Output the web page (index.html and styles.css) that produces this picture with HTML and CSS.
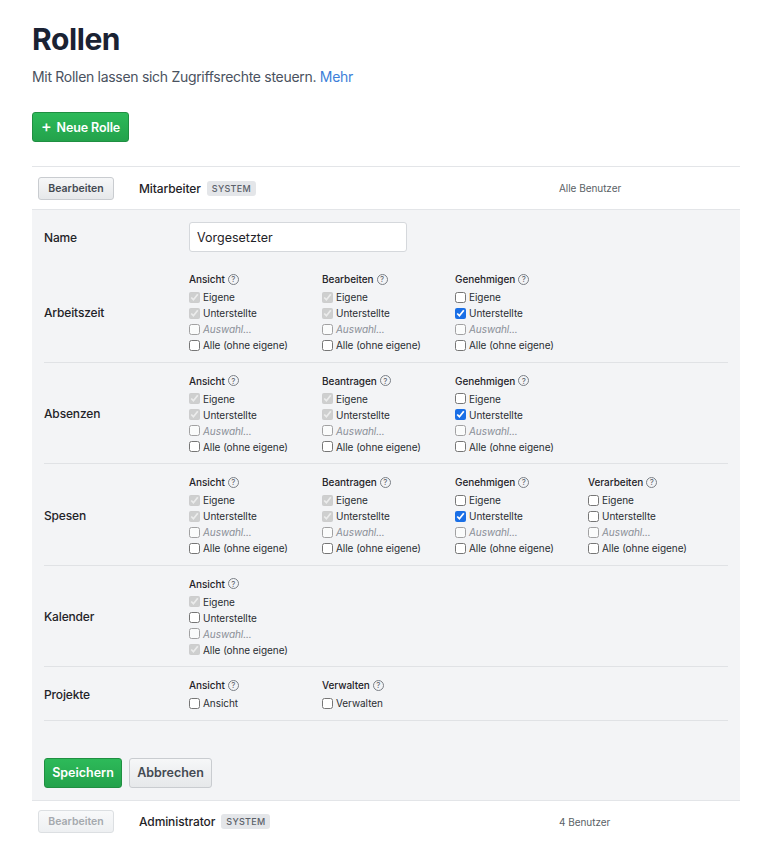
FILE: index.html
```html
<!DOCTYPE html>
<html lang="de">
<head>
<meta charset="utf-8">
<title>Rollen</title>
<link rel="stylesheet" href="styles.css">
</head>
<body>
<div class="page">
  <h1 class="title">Rollen</h1>
  <p class="lead">Mit Rollen lassen sich Zugriffsrechte steuern. <a class="more" href="#">Mehr</a></p>
  <button class="btn btn-green btn-new"><span class="plus">+</span> Neue Rolle</button>

  <div class="role-row">
    <button class="btn btn-grey btn-small">Bearbeiten</button>
    <div class="role-name">Mitarbeiter <span class="badge">System</span></div>
    <div class="role-users">Alle Benutzer</div>
  </div>

  <div class="panel">
    <div class="name-row">
      <label class="sec-label">Name</label>
      <input class="name-input" type="text" value="Vorgesetzter">
    </div>

    <div class="section">
      <div class="sec-label">Arbeitszeit</div>
      <div class="group">
        <div class="g-head">Ansicht <span class="help">?</span></div>
        <label class="cb"><input type="checkbox" checked disabled><span>Eigene</span></label>
        <label class="cb"><input type="checkbox" checked disabled><span>Unterstellte</span></label>
        <label class="cb off"><input type="checkbox"><span>Auswahl...</span></label>
        <label class="cb"><input type="checkbox"><span>Alle (ohne eigene)</span></label>
      </div>
      <div class="group">
        <div class="g-head">Bearbeiten <span class="help">?</span></div>
        <label class="cb"><input type="checkbox" checked disabled><span>Eigene</span></label>
        <label class="cb"><input type="checkbox" checked disabled><span>Unterstellte</span></label>
        <label class="cb off"><input type="checkbox"><span>Auswahl...</span></label>
        <label class="cb"><input type="checkbox"><span>Alle (ohne eigene)</span></label>
      </div>
      <div class="group">
        <div class="g-head">Genehmigen <span class="help">?</span></div>
        <label class="cb"><input type="checkbox"><span>Eigene</span></label>
        <label class="cb"><input type="checkbox" checked><span>Unterstellte</span></label>
        <label class="cb off"><input type="checkbox"><span>Auswahl...</span></label>
        <label class="cb"><input type="checkbox"><span>Alle (ohne eigene)</span></label>
      </div>
    </div>

    <div class="section">
      <div class="sec-label">Absenzen</div>
      <div class="group">
        <div class="g-head">Ansicht <span class="help">?</span></div>
        <label class="cb"><input type="checkbox" checked disabled><span>Eigene</span></label>
        <label class="cb"><input type="checkbox" checked disabled><span>Unterstellte</span></label>
        <label class="cb off"><input type="checkbox"><span>Auswahl...</span></label>
        <label class="cb"><input type="checkbox"><span>Alle (ohne eigene)</span></label>
      </div>
      <div class="group">
        <div class="g-head">Beantragen <span class="help">?</span></div>
        <label class="cb"><input type="checkbox" checked disabled><span>Eigene</span></label>
        <label class="cb"><input type="checkbox" checked disabled><span>Unterstellte</span></label>
        <label class="cb off"><input type="checkbox"><span>Auswahl...</span></label>
        <label class="cb"><input type="checkbox"><span>Alle (ohne eigene)</span></label>
      </div>
      <div class="group">
        <div class="g-head">Genehmigen <span class="help">?</span></div>
        <label class="cb"><input type="checkbox"><span>Eigene</span></label>
        <label class="cb"><input type="checkbox" checked><span>Unterstellte</span></label>
        <label class="cb off"><input type="checkbox"><span>Auswahl...</span></label>
        <label class="cb"><input type="checkbox"><span>Alle (ohne eigene)</span></label>
      </div>
    </div>

    <div class="section">
      <div class="sec-label">Spesen</div>
      <div class="group">
        <div class="g-head">Ansicht <span class="help">?</span></div>
        <label class="cb"><input type="checkbox" checked disabled><span>Eigene</span></label>
        <label class="cb"><input type="checkbox" checked disabled><span>Unterstellte</span></label>
        <label class="cb off"><input type="checkbox"><span>Auswahl...</span></label>
        <label class="cb"><input type="checkbox"><span>Alle (ohne eigene)</span></label>
      </div>
      <div class="group">
        <div class="g-head">Beantragen <span class="help">?</span></div>
        <label class="cb"><input type="checkbox" checked disabled><span>Eigene</span></label>
        <label class="cb"><input type="checkbox" checked disabled><span>Unterstellte</span></label>
        <label class="cb off"><input type="checkbox"><span>Auswahl...</span></label>
        <label class="cb"><input type="checkbox"><span>Alle (ohne eigene)</span></label>
      </div>
      <div class="group">
        <div class="g-head">Genehmigen <span class="help">?</span></div>
        <label class="cb"><input type="checkbox"><span>Eigene</span></label>
        <label class="cb"><input type="checkbox" checked><span>Unterstellte</span></label>
        <label class="cb off"><input type="checkbox"><span>Auswahl...</span></label>
        <label class="cb"><input type="checkbox"><span>Alle (ohne eigene)</span></label>
      </div>
      <div class="group">
        <div class="g-head">Verarbeiten <span class="help">?</span></div>
        <label class="cb"><input type="checkbox"><span>Eigene</span></label>
        <label class="cb"><input type="checkbox"><span>Unterstellte</span></label>
        <label class="cb off"><input type="checkbox"><span>Auswahl...</span></label>
        <label class="cb"><input type="checkbox"><span>Alle (ohne eigene)</span></label>
      </div>
    </div>

    <div class="section">
      <div class="sec-label">Kalender</div>
      <div class="group">
        <div class="g-head">Ansicht <span class="help">?</span></div>
        <label class="cb"><input type="checkbox" checked disabled><span>Eigene</span></label>
        <label class="cb"><input type="checkbox"><span>Unterstellte</span></label>
        <label class="cb off"><input type="checkbox"><span>Auswahl...</span></label>
        <label class="cb"><input type="checkbox" checked disabled><span>Alle (ohne eigene)</span></label>
      </div>
    </div>

    <div class="section">
      <div class="sec-label">Projekte</div>
      <div class="group">
        <div class="g-head">Ansicht <span class="help">?</span></div>
        <label class="cb"><input type="checkbox"><span>Ansicht</span></label>
      </div>
      <div class="group">
        <div class="g-head">Verwalten <span class="help">?</span></div>
        <label class="cb"><input type="checkbox"><span>Verwalten</span></label>
      </div>
    </div>

    <div class="actions">
      <button class="btn btn-green btn-save">Speichern</button>
      <button class="btn btn-grey btn-cancel">Abbrechen</button>
    </div>
  </div>

  <div class="role-row role-last">
    <button class="btn btn-grey btn-small" disabled>Bearbeiten</button>
    <div class="role-name">Administrator <span class="badge">System</span></div>
    <div class="role-users">4 Benutzer</div>
  </div>
</div>
</body>
</html>
```
FILE: styles.css
```css
* { box-sizing: border-box; }
html, body { margin: 0; padding: 0; background: #fff; }
body {
  font-family: Inter, "Noto Sans", "Liberation Sans", sans-serif;
  color: #1f2328;
}
.page {
  width: 708px;
  margin-left: 32px;
  padding-top: 20px;
}
.title {
  margin: 0;
  font-size: 30px;
  line-height: 38px;
  font-weight: 700;
  color: #1a2233;
  letter-spacing: -0.4px;
}
.lead {
  margin: 9px 0 0;
  font-size: 14px;
  line-height: 20px;
  letter-spacing: -0.3px;
  color: #4a5260;
}
.more { color: #3d7fd9; text-decoration: none; }

.btn {
  font-family: inherit;
  border-radius: 3px;
  cursor: pointer;
  display: inline-flex;
  align-items: center;
  justify-content: center;
}
.btn-green {
  background: linear-gradient(#2dba59, #23a24b);
  border: 1px solid #1f8f41;
  color: #fff;
  font-weight: 600;
}
.btn-grey {
  background: linear-gradient(#f6f7f8, #e6e8ea);
  border: 1px solid #c9ccd0;
  color: #444a52;
  font-weight: 600;
}
.btn-new {
  margin-top: 25px;
  height: 30px;
  width: 97px;
  font-size: 12.5px;
  letter-spacing: -0.1px;
  padding: 0;
}
.plus { font-size: 16px; font-weight: 500; margin-right: 5px; line-height: 1; position: relative; top: -1px; }

.role-row {
  margin-top: 24px;
  border-top: 1px solid #e3e5e8;
  height: 43px;
  display: flex;
  align-items: center;
  padding-left: 6px;
}
.btn-small {
  width: 76px;
  height: 23px;
  font-size: 10.5px;
  padding: 0;
}
.btn-small:disabled { color: #a5a9ae; background: linear-gradient(#f8f9fa, #eef0f2); border-color: #dcdfe2; cursor: default; }
.role-name {
  margin-left: 25px;
  width: 420px;
  font-size: 12px;
  letter-spacing: -0.1px;
  font-weight: 500;
  color: #1f2328;
  display: flex;
  align-items: center;
}
.badge {
  margin-left: 6px;
  background: #e4e6e9;
  color: #5b6169;
  font-size: 9px;
  font-weight: 500;
  text-transform: uppercase;
  letter-spacing: 0.3px;
  padding: 2px 5px;
  border-radius: 3px;
  line-height: 11px;
}
.role-users {
  font-size: 10px;
  letter-spacing: -0.05px;
  color: #5a5f66;
}

.panel {
  background: #f3f4f6;
  border-top: 1px solid #e3e5e8;
  padding: 12px 12px 12px;
}
.name-row {
  display: flex;
  align-items: center;
  height: 30px;
  margin-bottom: 9px;
}
.sec-label {
  width: 145px;
  font-size: 12px;
  letter-spacing: -0.15px;
  font-weight: 500;
  color: #1f2328;
  flex-shrink: 0;
}
.name-input {
  width: 218px;
  height: 30px;
  border: 1px solid #d5d8dc;
  border-radius: 3px;
  background: #fff;
  font-family: inherit;
  font-size: 12.5px;
  color: #1f2328;
  padding: 0 7px;
  outline: none;
}

.section {
  display: flex;
  align-items: center;
  border-bottom: 1px solid #e0e2e5;
  padding: 10px 0 8.5px;
}
.section:last-of-type { padding-bottom: 9.5px; }
.group {
  width: 133px;
  display: flex;
  flex-direction: column;
}
.g-head {
  font-size: 10px;
  font-weight: 500;
  line-height: 16px;
  letter-spacing: -0.05px;
  color: #1f2328;
  margin-bottom: 2px;
  display: flex;
  align-items: center;
}
.help {
  display: inline-flex;
  align-items: center;
  justify-content: center;
  width: 11px;
  height: 11px;
  border: 1px solid #7a7f86;
  border-radius: 50%;
  font-size: 8px;
  font-weight: 400;
  color: #5b6068;
  margin-left: 3px;
  line-height: 1;
}
.cb {
  display: flex;
  align-items: center;
  height: 16px;
  font-size: 10px;
  letter-spacing: -0.05px;
  color: #2a2e33;
}
.cb input {
  width: 11px;
  height: 11px;
  margin: 0 3px 0 0;
  accent-color: #1a6fe6;
}
.cb.off input { opacity: 0.65; }
.cb.off span { font-style: italic; color: #8a8f96; }

.actions {
  margin-top: 37px;
  display: flex;
  gap: 7px;
}
.btn-save {
  height: 30px;
  width: 78px;
  font-size: 12.5px;
}
.btn-cancel {
  height: 30px;
  width: 83px;
  font-size: 12.5px;
}
.role-last { margin-top: 0; }
```
